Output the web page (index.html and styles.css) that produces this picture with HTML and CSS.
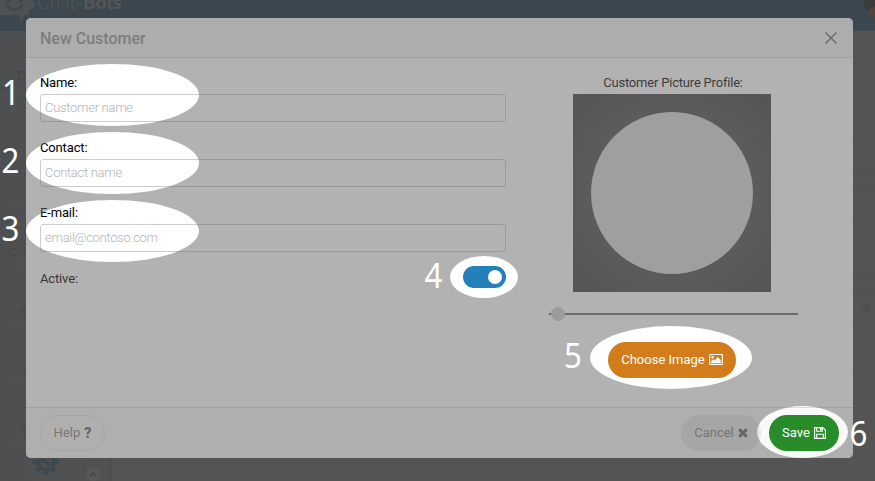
FILE: index.html
```
<!DOCTYPE html>
<html lang="en">
<head>
<meta charset="utf-8">
<title>New Customer</title>
<link rel="stylesheet" href="styles.css">
</head>
<body>
<div class="page">
  <header class="topbar">
    <svg class="bot" width="36" height="26" viewBox="0 0 36 26"><path d="M0-8H26Q30-8 30-3V1h2q3 0 3 4t-3 4h-2q0 6-5 6l-5 6v-6H0Z" fill="#3b3c3e"/><path d="M6 3Q14 13 23 3V7Q14 15 6 7Z" fill="#122b3b"/><circle cx="8" cy="0" r="2.5" fill="#122b3b"/><circle cx="21" cy="0" r="2.5" fill="#122b3b"/></svg>
    <div class="brand">Chat-<b>Bots</b></div>
    <div class="avatar"></div>
  </header>
  <div class="workspace">
    <nav class="sidebar">
      <div class="item item-a">Da</div>
      <div class="item"></div>
      <div class="item"></div>
      <div class="item item-b">Con</div>
      <div class="item item-c">B</div>
      <div class="item item-e">I</div>
      <div class="item item-d">C</div>
      <div class="tools">
        <svg class="gear" width="26" height="26" viewBox="-13 -13 26 26"><g fill="#142c38"><circle r="9.5"/><rect x="-2.5" y="-13" width="5" height="26" rx="1"/><rect x="-2.5" y="-13" width="5" height="26" rx="1" transform="rotate(45)"/><rect x="-2.5" y="-13" width="5" height="26" rx="1" transform="rotate(90)"/><rect x="-2.5" y="-13" width="5" height="26" rx="1" transform="rotate(135)"/></g><circle r="6" fill="#37393c"/><path d="M-6-6L5 5M-2-5a4 4 0 0 1-4 4" stroke="#142c38" stroke-width="3" fill="none"/></svg>
        <svg class="up" width="14" height="14" viewBox="0 0 14 14"><circle cx="7" cy="7" r="7" fill="#48494a"/><path d="M4 9l3-3 3 3" fill="none" stroke="#222" stroke-width="1.3"/></svg>
      </div>
    </nav>
    <main class="rows">
      <div class="r1"></div><div class="r2"></div><div class="r3"></div><div class="r4"></div><div class="r5"></div><div class="r6"></div>
      <div class="r7"><svg width="12" height="12" viewBox="0 0 12 12"><path d="M1 6H9M5.500 1.500L10 6l-4.500 4.500" fill="none" stroke="#343434" stroke-width="2.400"/></svg></div>
      <div class="r8"></div>
    </main>
  </div>
</div>

<section class="modal">
  <div class="modal-head">
    <h1>New Customer</h1>
    <svg width="14" height="14" viewBox="0 0 14 14"><path d="M1.500 1.500l11 11m0-11l-11 11" fill="none" stroke="#6c6c6c" stroke-width="1.400"/></svg>
  </div>
  <div class="modal-body">
    <form class="fields">
      <label>Name:</label>
      <input type="text" placeholder="Customer name">
      <label>Contact:</label>
      <input type="text" placeholder="Contact name">
      <label>E-mail:</label>
      <input type="text" placeholder="email@contoso.com">
      <div class="active"><span>Active:</span><span class="switch"><i></i></span></div>
    </form>
    <div class="picture">
      <div class="caption">Customer Picture Profile:</div>
      <div class="cropper"><div class="disc"></div></div>
      <div class="slider"><i></i></div>
      <button class="btn choose">Choose Image
        <svg width="14" height="11" viewBox="0 0 15 12"><path d="M1 .6h13q.4 0 .4.4v10q0 .4-.4.4H1q-.4 0-.4-.4V1Q.6.6 1 .6Z" fill="none" stroke="#fff" stroke-width="1.200"/><circle cx="3.800" cy="3.600" r="1.300" fill="#fff"/><path d="M2.300 10V8l2.200-2.200L6 7.200 9.500 3.400 12.700 6.700V10Z" fill="#fff"/></svg>
      </button>
    </div>
  </div>
  <div class="modal-foot">
    <button class="btn help">Help <b>?</b></button>
    <button class="btn cancel">Cancel
      <svg width="10" height="10" viewBox="0 0 10 10"><path d="M1.300 1.300l7.400 7.400m0-7.400l-7.400 7.400" stroke="#646464" stroke-width="3"/></svg>
    </button>
    <button class="btn save">Save
      <svg width="12" height="12" viewBox="0 0 12 12" fill="none" stroke="#fff" stroke-width="1.100"><path d="M.6.6H8.800L11.400 3.200V11.400H.6ZM2.700.6V4.300H8.300V.6M2.700 11.400V7.200H9.300V11.400"/><path d="M6.800 1v2.600" stroke-width="1.800"/></svg>
    </button>
  </div>
</section>

<svg class="guide" width="875" height="481" viewBox="0 0 875 481">
  <defs>
    <mask id="spots">
      <rect width="875" height="481" fill="#fff"/>
      <ellipse cx="112.500" cy="95" rx="86.500" ry="31"/>
      <ellipse cx="112.500" cy="163" rx="86.500" ry="31"/>
      <ellipse cx="112.500" cy="231" rx="86.500" ry="31"/>
      <ellipse cx="484" cy="277" rx="34" ry="21"/>
      <ellipse cx="671" cy="357.500" rx="81" ry="31.500"/>
      <ellipse cx="802.500" cy="432" rx="45.500" ry="26"/>
    </mask>
  </defs>
  <rect width="875" height="481" fill="#666" fill-opacity=".5" mask="url(#spots)"/>
  <g class="steps">
    <text transform="translate(2 105) scale(.92 1)">1</text>
    <text transform="translate(1.500 173) scale(.92 1)">2</text>
    <text transform="translate(1.500 241) scale(.92 1)">3</text>
    <text transform="translate(424.500 288) scale(.92 1)">4</text>
    <text transform="translate(564 368) scale(.92 1)">5</text>
    <text transform="translate(849.500 446) scale(.92 1)">6</text>
  </g>
</svg>
</body>
</html>
```
FILE: styles.css
```
* { box-sizing: border-box; }
body {
  margin: 0;
  width: 875px;
  height: 481px;
  overflow: hidden;
  position: relative;
  font: 13px/16px Roboto, sans-serif;
  background: #424242;
}
.page { height: 481px; display: flex; flex-direction: column; overflow: hidden; }
.topbar { height: 31px; flex: none; background: #12283a; display: flex; overflow: hidden; }
.brand { font: 300 19px/24px Lato, sans-serif; color: #45474a; margin: -10px 0 0 1px; }
.brand b { font-weight: 900; }
.avatar { width: 30px; height: 30px; border-radius: 50%; margin: -12px -19px 0 auto; background: linear-gradient(150deg, #111 50%, #30241f 52%); }
.workspace { flex: 1; display: flex; min-height: 0; }
.sidebar { width: 112px; background: linear-gradient(90deg, #37393d, #3b3c3e); color: #202124; border-right: 3px solid #353638; }
.item { height: 59px; padding-top: 38px; border-bottom: 1px solid #323437; font-weight: 300; }
.item:first-child { height: 58px; padding-top: 37px; }
.item-a { padding-left: 17px; }
.item-b { padding-left: 8px; }
.item-c { padding-left: 19px; }
.item-d { padding-left: 21px; }
.item-e { padding-left: 24px; }
.tools { display: flex; padding: 6px 0 0 33px; }
.up { margin: 18px 0 0 27px; }
.rows { flex: 1; }
.rows > div { border-bottom: 1px solid #393939; }
.rows .r1 { height: 107px; }
.r2 { height: 34px; }
.r3 { height: 16px; }
.r4 { height: 35px; }
.r5 { height: 53px; }
.r6 { height: 16px; }
.r7 { height: 35px; display: flex; align-items: center; justify-content: flex-end; padding-right: 4px; }
.r8 { height: 42px; }

.modal {
  position: absolute;
  left: 26px;
  top: 18px;
  width: 827px;
  height: 440px;
  border-radius: 5px;
  overflow: hidden;
  background: #fff;
  display: flex;
  flex-direction: column;
}
.modal-head {
  height: 40px;
  flex: none;
  background: #f5f5f5;
  border-bottom: 1px solid #dcdcdc;
  display: flex;
  align-items: center;
  justify-content: space-between;
  padding: 1px 15px 0 14px;
}
h1 { margin: 0; padding-top: 2px; font-size: 16px; font-weight: 500; color: #949494; }
.modal-body { flex: 1; display: flex; padding: 17px 14px 0; min-height: 0; }
.fields { width: 466px; }
label { display: block; height: 19px; color: #000; letter-spacing: -.15px; }
input {
  display: block;
  width: 466px;
  height: 28px;
  margin: 0 0 18px;
  padding: 0 4px 2px;
  border: 1px solid #ccc;
  border-radius: 3px;
  background: transparent;
  font: 300 13px Roboto, sans-serif;
  letter-spacing: -.3px;
}
input::placeholder { color: #b3b3b3; opacity: 1; }
.active { display: flex; justify-content: space-between; align-items: center; height: 22px; margin-top: -4px; }
.active span:first-child { padding-top: 3px; letter-spacing: -.15px; }
.switch { width: 43px; height: 22px; border-radius: 11px; background: #2480b9; display: flex; align-items: center; justify-content: flex-end; padding-right: 4px; }
.switch i { width: 14px; height: 14px; border-radius: 50%; background: #fff; }
.picture { width: 250px; margin-left: 42px; display: flex; flex-direction: column; align-items: center; }
.caption { height: 19px; white-space: nowrap; color: #0b0b0b; letter-spacing: -.2px; }
.cropper {
  width: 198px;
  height: 198px;
  margin-left: -2px;
  flex: none;
  display: flex;
  align-items: center;
  justify-content: center;
  background: radial-gradient(circle, #565656 45%, #434343 100%);
}
.disc { width: 162px; height: 162px; border-radius: 50%; background: #d8d8d8; }
.slider { width: 249px; height: 14px; margin-top: 15px; display: flex; align-items: center; background: linear-gradient(#727272, #727272) 0 6px / 100% 2px no-repeat; }
.slider i { width: 14px; height: 14px; border-radius: 50%; background: #d0d0d0; margin-left: 2px; }
.btn {
  height: 36px;
  border: 0;
  border-radius: 18px;
  padding: 0 0 1px;
  display: flex;
  align-items: center;
  justify-content: center;
  gap: 4px;
  font: 13px Roboto, sans-serif;
  white-space: nowrap;
}
.choose { width: 128px; margin: 21px 0 0 -2px; flex: none; background: #d37c1b; color: #fff; }
.modal-foot { height: 51px; flex: none; border-top: 1px solid #dcdcdc; background: #f9f9f9; display: flex; align-items: center; padding: 0 14px; }
.help { width: 65px; border: 1px solid #e4e4e4; background: transparent; color: #868686; }
.help b { color: #646464; font-weight: 900; font-size: 14px; }
.cancel { width: 80px; margin-left: auto; background: #e6e6e6; color: #868686; }
.save { width: 70px; margin-left: 8px; background: #278c29; color: #fff; }
.guide { position: absolute; left: 0; top: 0; }
.steps { font: 34px "Noto Sans", sans-serif; fill: #fff; }
```
